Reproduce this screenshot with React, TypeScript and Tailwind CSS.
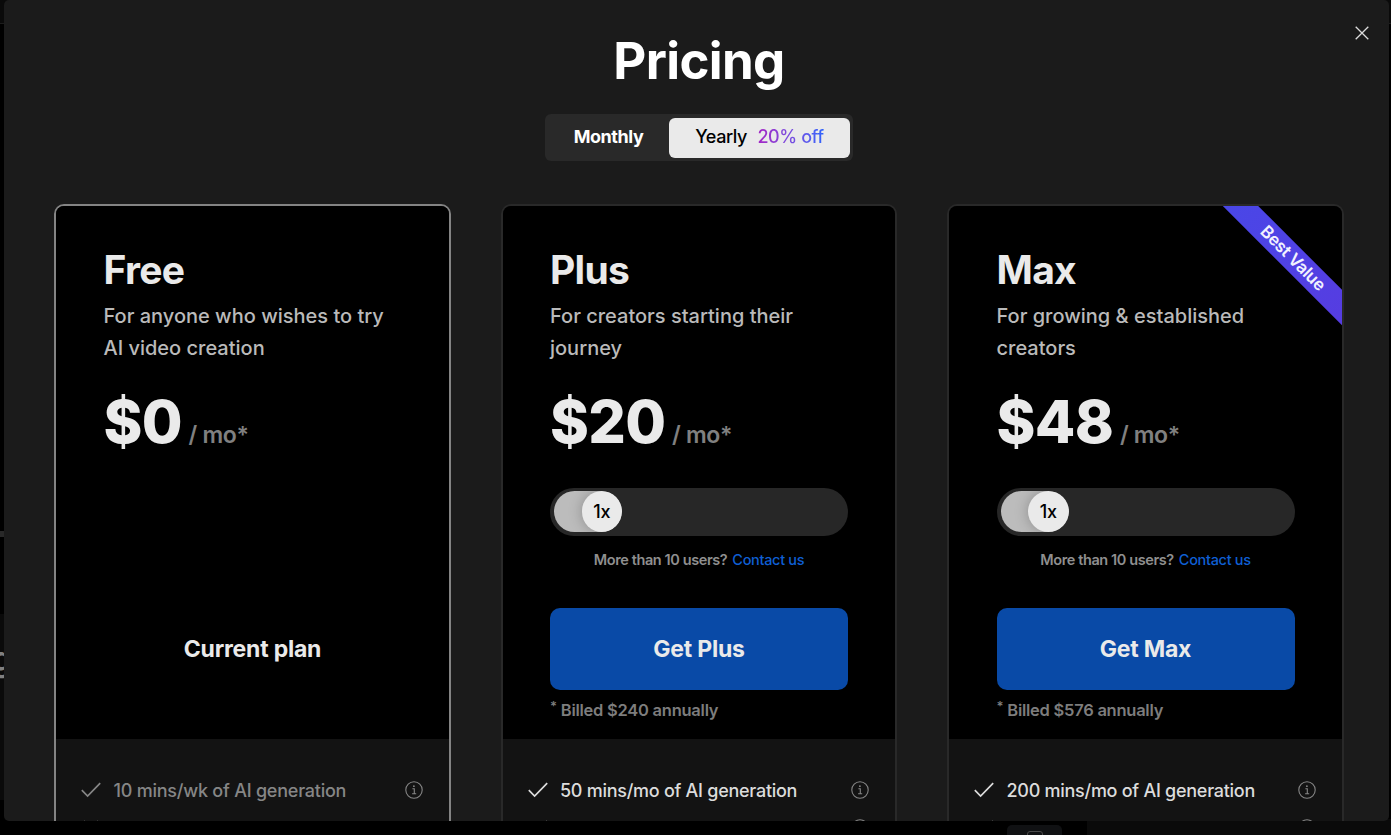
import { useState } from "react";

interface Feature {
  text: string;
  included: boolean;
  info: boolean;
}

interface Plan {
  name: string;
  description: string[];
  price: string;
  cta: string;
  billed?: string;
  current?: boolean;
  ribbon?: string;
  features: Feature[];
}

const plans: Plan[] = [
  {
    name: "Free",
    description: ["For anyone who wishes to try", "AI video creation"],
    price: "$0",
    cta: "Current plan",
    current: true,
    features: [
      { text: "10 mins/wk of AI generation", included: true, info: true },
      { text: "No iStock", included: false, info: false },
    ],
  },
  {
    name: "Plus",
    description: ["For creators starting their", "journey"],
    price: "$20",
    cta: "Get Plus",
    billed: "Billed $240 annually",
    features: [
      { text: "50 mins/mo of AI generation", included: true, info: true },
      { text: "80 iStock/mo", included: true, info: true },
    ],
  },
  {
    name: "Max",
    description: ["For growing & established", "creators"],
    price: "$48",
    cta: "Get Max",
    billed: "Billed $576 annually",
    ribbon: "Best Value",
    features: [
      { text: "200 mins/mo of AI generation", included: true, info: true },
      { text: "320 iStock/mo", included: true, info: true },
    ],
  },
];

function CheckIcon() {
  return (
    <svg width="20" height="16" viewBox="0 0 20 16" fill="none" stroke="currentColor" strokeWidth="1.7">
      <path d="M0.8 8.2 L6.6 14 L19.2 1.2" />
    </svg>
  );
}

function CrossIcon() {
  return (
    <svg width="20" height="16" viewBox="0 0 20 16" fill="none" stroke="currentColor" strokeWidth="1.5">
      <path d="M3 1 L17 15 M17 1 L3 15" />
    </svg>
  );
}

function InfoIcon() {
  return (
    <svg width="18" height="18" viewBox="0 0 18 18" fill="none" stroke="currentColor" strokeWidth="1.1">
      <circle cx="9" cy="9" r="8.2" />
      <circle cx="8.9" cy="5.2" r="0.9" fill="currentColor" stroke="none" />
      <path d="M7.4 7.7 H9.3 V12.7 M7.1 12.8 H11.2" />
    </svg>
  );
}

function SeatSlider() {
  return (
    <div className="flex h-[48px] items-center rounded-full bg-[#272727] px-1">
      <div className="flex h-[40.5px] w-[68px] justify-end overflow-hidden rounded-full bg-[#bcbcbc]">
        <div className="flex size-[40.5px] items-center justify-center rounded-full bg-[#eaeaea] text-[18px] font-medium tracking-[-0.3px] text-black shadow-[0_0_14px_rgba(0,0,0,0.25)]">
          1x
        </div>
      </div>
    </div>
  );
}

function PlanCard({ plan }: { plan: Plan }) {
  return (
    <article
      className={`relative w-[396.5px] shrink-0 overflow-hidden rounded-[10px] border-2 ${
        plan.current ? "border-[#848484]" : "border-[#292929]"
      } bg-[#131313]`}
    >
      {plan.ribbon && (
        <div className="absolute right-[-53px] top-[37px] flex h-[25px] w-[210px] rotate-45 items-center justify-center bg-linear-to-r from-[#4748e8] to-[#573be0] pl-[8px] text-[17px] font-semibold tracking-[-0.3px] text-[#f2f2ff]">
          {plan.ribbon}
        </div>
      )}

      <div className="h-[533px] bg-black pl-[47.5px] pr-[47px] pt-[40px]">
        <h2 className="text-[39px] font-bold leading-[48px] tracking-[-0.7px] text-[#eaeaea]">{plan.name}</h2>
        <p className="mt-[6px] whitespace-nowrap text-[20px] font-medium leading-8 text-[#bababa]">
          {plan.description[0]}
          <br />
          {plan.description[1]}
        </p>
        <div className="mt-[22px] flex h-[72px] items-baseline">
          <span className="text-[59px] font-extrabold leading-[72px] tracking-[-0.6px] text-[#eaeaea]">
            {plan.price}
          </span>
          <span className="ml-[6.5px] text-[23px] font-semibold tracking-[-0.35px] text-[#808080]">/ mo*</span>
        </div>

        <div className="mt-[29.5px] h-[120px]">
          {!plan.current && (
            <>
              <SeatSlider />
              <p className="mt-[14.5px] flex justify-center gap-[5px] text-[14.5px] font-semibold leading-5 tracking-[-0.4px] text-[#8f8f8f]">
                More than 10 users?
                <a className="font-medium tracking-[-0.32px] text-[#0f5fd3]">Contact us</a>
              </p>
            </>
          )}
        </div>

        <button
          className={`flex h-[82px] w-full items-center justify-center rounded-[10px] pt-px text-[23px] font-bold tracking-[-0.22px] text-[#eaeaea] ${
            plan.current ? "" : "bg-[#094aa7]"
          }`}
        >
          {plan.cta}
        </button>
        {plan.billed && (
          <p className="mt-[8.5px] flex text-[16.5px] font-semibold leading-6 tracking-[-0.25px] text-[#7d7d7d]">
            <span className="-mt-1 mr-1 text-[13px]">*</span>
            {plan.billed}
          </p>
        )}
      </div>

      <ul className="flex flex-col gap-[14px] pl-[25px] pr-[26px] pt-[39px]">
        {plan.features.map((f) => (
          <li
            key={f.text}
            className={`flex h-6 items-center text-[18px] font-medium ${
              plan.current ? "tracking-[-0.23px] text-[#868686]" : "tracking-[-0.27px] text-[#dcdcdc]"
            }`}
          >
            {f.included ? <CheckIcon /> : <CrossIcon />}
            <span className="ml-[12.5px] flex-1 whitespace-nowrap">{f.text}</span>
            {f.info && (
              <span className="text-[#868686]">
                <InfoIcon />
              </span>
            )}
          </li>
        ))}
      </ul>
    </article>
  );
}

function BillingToggle() {
  const [yearly, setYearly] = useState(true);

  return (
    <div className="flex h-[47px] w-[308px] items-center rounded-[6px] bg-[#292929] p-[3px]">
      <button
        onClick={() => setYearly(false)}
        className="w-[121px] pb-[2px] text-center text-[18px] font-bold tracking-[-0.45px] text-white"
      >
        Monthly
      </button>
      <button
        onClick={() => setYearly(true)}
        className={`mt-px flex h-10 w-[181px] items-center justify-center gap-[10.5px] rounded-[6px] pb-[3px] text-[18px] font-medium tracking-[-0.42px] ${
          yearly ? "bg-[#eaeaea] text-black" : "text-white"
        }`}
      >
        Yearly
        <span className="bg-linear-to-r from-[#a321c4] to-[#2b63fb] bg-clip-text text-transparent">
          20% off
        </span>
      </button>
    </div>
  );
}

export default function App() {
  return (
    <div className="relative h-[835px] w-[1391px] overflow-hidden bg-black font-['Inter',sans-serif]">
      {/* editor page that shows around the dialog */}
      <div className="absolute left-0 top-0 h-6 w-full border-b border-[#1c1c1c] bg-[#0a0a0a]" />
      <div className="absolute left-0 top-[531px] h-[6px] w-4 bg-[#292929]" />
      <div className="absolute left-0 top-[614px] h-[186px] w-4 bg-[#0a0a0a]" />
      <div className="absolute -left-[8.5px] top-[637px] text-[34px] font-semibold leading-[44px] text-[#808080]">
        g
      </div>
      <div className="absolute bottom-0 left-[1087px] right-0 h-4 bg-[#0a0a0a]" />
      <div className="absolute left-[1007px] top-[825px] flex h-8 w-[55px] justify-center rounded-[5px] bg-[#101113] pt-[6px]">
        <div className="h-4 w-4 rounded-[3px] border border-[#4a4a4a]" />
      </div>

      <section className="absolute left-1 top-0 h-[820.5px] w-[1384.5px] overflow-hidden rounded-[5px] bg-[#1b1b1b]">
        <button aria-label="Close" className="absolute left-[1351px] top-[25.5px] text-[#dddddd]">
          <svg width="14" height="14" viewBox="0 0 14 14" fill="none" stroke="currentColor" strokeWidth="1.3">
            <path d="M0.7 0.7 L13.3 13.3 M13.3 0.7 L0.7 13.3" />
          </svg>
        </button>

        <header className="flex flex-col items-center pl-[5.5px] pt-[29px]">
          <h1 className="text-[51px] font-bold leading-[64px] tracking-[-0.65px] text-white">Pricing</h1>
          <div className="mt-[20.75px]">
            <BillingToggle />
          </div>
        </header>

        <div className="mt-[43.25px] flex h-[700px] gap-[50px] pl-[50px]">
          {plans.map((plan) => (
            <PlanCard key={plan.name} plan={plan} />
          ))}
        </div>
      </section>
    </div>
  );
}
